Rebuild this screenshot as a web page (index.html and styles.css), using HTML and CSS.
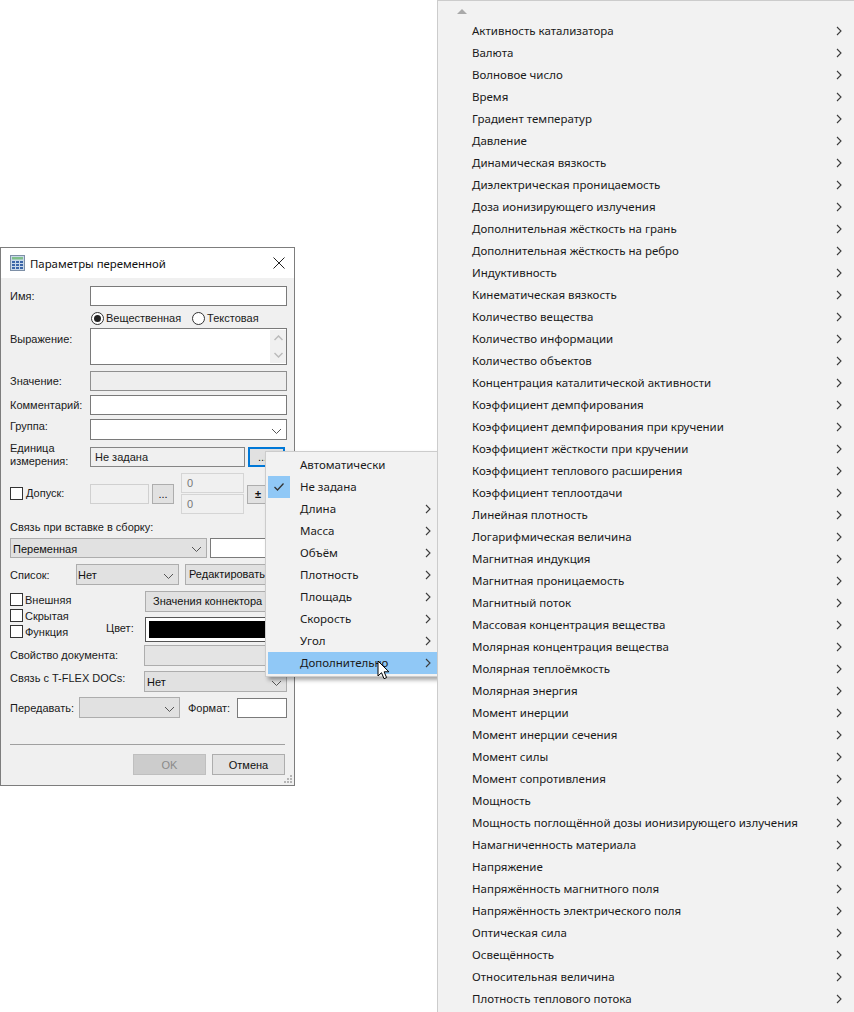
FILE: index.html
```html
<!DOCTYPE html>
<html lang="ru">
<head>
<meta charset="utf-8">
<title>Параметры переменной</title>
<link rel="stylesheet" href="styles.css">
</head>
<body>
<svg class="defs" width="0" height="0" aria-hidden="true">
  <symbol id="chev" viewBox="0 0 6 10"><path d="M1 1l4 4-4 4" fill="none" stroke="#3c3c3c" stroke-width="1.1"/></symbol>
  <symbol id="down" viewBox="0 0 11 6"><path d="M1 1l4.500 4.500L10 1" fill="none" stroke="#555" stroke-width="1"/></symbol>
</svg>
<main class="desktop">
  <section class="dialog">
    <header class="titlebar">
      <svg class="appicon" width="15" height="16" viewBox="0 0 15 16"><rect x=".5" y=".5" width="14" height="15" fill="#c9d8ea" stroke="#7d8fa6"/><rect x="2" y="2" width="11" height="2.500" fill="#7fbf8a"/><g fill="#3c66a8"><rect x="2" y="6" width="3" height="2"/><rect x="6" y="6" width="3" height="2"/><rect x="10" y="6" width="3" height="2"/><rect x="2" y="9" width="3" height="2"/><rect x="6" y="9" width="3" height="2"/><rect x="10" y="9" width="3" height="2"/><rect x="2" y="12" width="3" height="2"/><rect x="6" y="12" width="3" height="2"/><rect x="10" y="12" width="3" height="2"/></g></svg>
      <span class="title">Параметры переменной</span>
      <svg class="close" width="12" height="12" viewBox="0 0 12 12"><path d="M.5.500l11 11M11.500.500l-11 11" stroke="#222" stroke-width="1" fill="none"/></svg>
    </header>
    <div class="body">
      <div class="row r-name"><label class="lbl">Имя:</label><div class="field"></div></div>
      <div class="row r-radio">
        <span class="radio on"></span><span class="rtext">Вещественная</span>
        <span class="radio r2"></span><span class="rtext">Текстовая</span>
      </div>
      <div class="row r-expr"><label class="lbl lbl-top">Выражение:</label>
        <div class="field tall"><div class="spin"><svg width="9" height="6" viewBox="0 0 9 6"><path d="M.5 5l4-4 4 4" fill="none" stroke="#bbb" stroke-width="1.500"/></svg><svg width="9" height="6" viewBox="0 0 9 6"><path d="M.5 1l4 4 4-4" fill="none" stroke="#bbb" stroke-width="1.500"/></svg></div></div>
      </div>
      <div class="row r-val"><label class="lbl">Значение:</label><div class="field off"></div></div>
      <div class="row r-com"><label class="lbl">Комментарий:</label><div class="field"></div></div>
      <div class="row r-grp"><label class="lbl lbl-up">Группа:</label><div class="field sel"><svg class="dn" width="11" height="6"><use href="#down"/></svg></div></div>
      <div class="row r-unit"><label class="lbl two">Единица<br>измерения:</label><div class="field unit">Не задана</div><div class="btn focus">...</div></div>
      <div class="row r-tol">
        <div class="tolcheck"><span class="check"></span><span>Допуск:</span></div>
        <div class="field tolinput"></div>
        <div class="btn dots">...</div>
        <div class="tolpair"><div class="field num">0</div><div class="field num">0</div></div>
        <div class="btn pm">±</div>
      </div>
      <div class="row r-link"><label class="lbl wide">Связь при вставке в сборку:</label></div>
      <div class="row r-var"><div class="combo var">Переменная<svg class="dn" width="11" height="6"><use href="#down"/></svg></div><div class="field varin"></div></div>
      <div class="row r-list"><label class="lbl list">Список:</label><div class="combo lst">Нет<svg class="dn" width="11" height="6"><use href="#down"/></svg></div><div class="btn edit">Редактировать</div></div>
      <div class="row r-flags">
        <div class="flags">
          <div class="flag"><span class="check"></span><span class="ftext">Внешняя</span></div>
          <div class="flag"><span class="check"></span><span class="ftext">Скрытая</span></div>
          <div class="flag"><span class="check"></span><span class="ftext">Функция</span></div>
        </div>
        <div class="flagside">
          <div class="btn conn">Значения коннектора</div>
          <div class="colorrow"><span class="clabel">Цвет:</span><div class="swatch"><div class="black"></div></div></div>
        </div>
      </div>
      <div class="row r-doc"><label class="lbl doc">Свойство документа:</label><div class="combo blank"></div></div>
      <div class="row r-tflex"><label class="lbl doc lbl-up">Связь с T-FLEX DOCs:</label><div class="combo tf">Нет<svg class="dn" width="11" height="6"><use href="#down"/></svg></div></div>
      <div class="row r-send"><label class="lbl sendl">Передавать:</label><div class="combo send"><svg class="dn" width="11" height="6"><use href="#down"/></svg></div><label class="fmt">Формат:</label><div class="field fmtin"></div></div>
      <hr class="sep">
      <div class="row r-foot"><div class="btn disabled">OK</div><div class="btn cancel">Отмена</div></div>
    </div>
    <svg class="grip" width="10" height="10" viewBox="0 0 10 10"><g fill="#b5b5b5"><rect x="7" y="1" width="2" height="2"/><rect x="4" y="4" width="2" height="2"/><rect x="7" y="4" width="2" height="2"/><rect x="1" y="7" width="2" height="2"/><rect x="4" y="7" width="2" height="2"/><rect x="7" y="7" width="2" height="2"/></g></svg>
  </section>

  <nav class="menu first">
    <div class="mi"><span class="mt">Автоматически</span></div>
    <div class="mi"><span class="tick"><svg width="12" height="10" viewBox="0 0 12 10"><path d="M1.500 5l3 3 6-6.500" fill="none" stroke="#333" stroke-width="1.300"/></svg></span><span class="mt">Не задана</span></div>
    <div class="mi"><span class="mt">Длина</span><svg class="ch" width="6" height="10"><use href="#chev"/></svg></div>
    <div class="mi"><span class="mt">Масса</span><svg class="ch" width="6" height="10"><use href="#chev"/></svg></div>
    <div class="mi"><span class="mt">Объём</span><svg class="ch" width="6" height="10"><use href="#chev"/></svg></div>
    <div class="mi"><span class="mt">Плотность</span><svg class="ch" width="6" height="10"><use href="#chev"/></svg></div>
    <div class="mi"><span class="mt">Площадь</span><svg class="ch" width="6" height="10"><use href="#chev"/></svg></div>
    <div class="mi"><span class="mt">Скорость</span><svg class="ch" width="6" height="10"><use href="#chev"/></svg></div>
    <div class="mi"><span class="mt">Угол</span><svg class="ch" width="6" height="10"><use href="#chev"/></svg></div>
    <div class="mi hot"><span class="mt">Дополнительно</span><svg class="ch" width="6" height="10"><use href="#chev"/></svg></div>
  </nav>

  <svg class="cursor" width="13" height="21" viewBox="0 0 13 21"><path d="M1 1v15l3.500-3.300 2.500 6 2.600-1.100-2.500-5.800h4.800z" fill="#fff" stroke="#000" stroke-width="1"/></svg>

  <nav class="menu second">
    <div class="up"><svg width="10" height="5" viewBox="0 0 10 5"><path d="M5 0l5 5H0z" fill="#a9a9a9"/></svg></div>
    <div class="mi2">Активность катализатора<svg class="ch" width="6" height="10"><use href="#chev"/></svg></div>
    <div class="mi2">Валюта<svg class="ch" width="6" height="10"><use href="#chev"/></svg></div>
    <div class="mi2">Волновое число<svg class="ch" width="6" height="10"><use href="#chev"/></svg></div>
    <div class="mi2">Время<svg class="ch" width="6" height="10"><use href="#chev"/></svg></div>
    <div class="mi2">Градиент температур<svg class="ch" width="6" height="10"><use href="#chev"/></svg></div>
    <div class="mi2">Давление<svg class="ch" width="6" height="10"><use href="#chev"/></svg></div>
    <div class="mi2">Динамическая вязкость<svg class="ch" width="6" height="10"><use href="#chev"/></svg></div>
    <div class="mi2">Диэлектрическая проницаемость<svg class="ch" width="6" height="10"><use href="#chev"/></svg></div>
    <div class="mi2">Доза ионизирующего излучения<svg class="ch" width="6" height="10"><use href="#chev"/></svg></div>
    <div class="mi2">Дополнительная жёсткость на грань<svg class="ch" width="6" height="10"><use href="#chev"/></svg></div>
    <div class="mi2">Дополнительная жёсткость на ребро<svg class="ch" width="6" height="10"><use href="#chev"/></svg></div>
    <div class="mi2">Индуктивность<svg class="ch" width="6" height="10"><use href="#chev"/></svg></div>
    <div class="mi2">Кинематическая вязкость<svg class="ch" width="6" height="10"><use href="#chev"/></svg></div>
    <div class="mi2">Количество вещества<svg class="ch" width="6" height="10"><use href="#chev"/></svg></div>
    <div class="mi2">Количество информации<svg class="ch" width="6" height="10"><use href="#chev"/></svg></div>
    <div class="mi2">Количество объектов<svg class="ch" width="6" height="10"><use href="#chev"/></svg></div>
    <div class="mi2">Концентрация каталитической активности<svg class="ch" width="6" height="10"><use href="#chev"/></svg></div>
    <div class="mi2">Коэффициент демпфирования<svg class="ch" width="6" height="10"><use href="#chev"/></svg></div>
    <div class="mi2">Коэффициент демпфирования при кручении<svg class="ch" width="6" height="10"><use href="#chev"/></svg></div>
    <div class="mi2">Коэффициент жёсткости при кручении<svg class="ch" width="6" height="10"><use href="#chev"/></svg></div>
    <div class="mi2">Коэффициент теплового расширения<svg class="ch" width="6" height="10"><use href="#chev"/></svg></div>
    <div class="mi2">Коэффициент теплоотдачи<svg class="ch" width="6" height="10"><use href="#chev"/></svg></div>
    <div class="mi2">Линейная плотность<svg class="ch" width="6" height="10"><use href="#chev"/></svg></div>
    <div class="mi2">Логарифмическая величина<svg class="ch" width="6" height="10"><use href="#chev"/></svg></div>
    <div class="mi2">Магнитная индукция<svg class="ch" width="6" height="10"><use href="#chev"/></svg></div>
    <div class="mi2">Магнитная проницаемость<svg class="ch" width="6" height="10"><use href="#chev"/></svg></div>
    <div class="mi2">Магнитный поток<svg class="ch" width="6" height="10"><use href="#chev"/></svg></div>
    <div class="mi2">Массовая концентрация вещества<svg class="ch" width="6" height="10"><use href="#chev"/></svg></div>
    <div class="mi2">Молярная концентрация вещества<svg class="ch" width="6" height="10"><use href="#chev"/></svg></div>
    <div class="mi2">Молярная теплоёмкость<svg class="ch" width="6" height="10"><use href="#chev"/></svg></div>
    <div class="mi2">Молярная энергия<svg class="ch" width="6" height="10"><use href="#chev"/></svg></div>
    <div class="mi2">Момент инерции<svg class="ch" width="6" height="10"><use href="#chev"/></svg></div>
    <div class="mi2">Момент инерции сечения<svg class="ch" width="6" height="10"><use href="#chev"/></svg></div>
    <div class="mi2">Момент силы<svg class="ch" width="6" height="10"><use href="#chev"/></svg></div>
    <div class="mi2">Момент сопротивления<svg class="ch" width="6" height="10"><use href="#chev"/></svg></div>
    <div class="mi2">Мощность<svg class="ch" width="6" height="10"><use href="#chev"/></svg></div>
    <div class="mi2">Мощность поглощённой дозы ионизирующего излучения<svg class="ch" width="6" height="10"><use href="#chev"/></svg></div>
    <div class="mi2">Намагниченность материала<svg class="ch" width="6" height="10"><use href="#chev"/></svg></div>
    <div class="mi2">Напряжение<svg class="ch" width="6" height="10"><use href="#chev"/></svg></div>
    <div class="mi2">Напряжённость магнитного поля<svg class="ch" width="6" height="10"><use href="#chev"/></svg></div>
    <div class="mi2">Напряжённость электрического поля<svg class="ch" width="6" height="10"><use href="#chev"/></svg></div>
    <div class="mi2">Оптическая сила<svg class="ch" width="6" height="10"><use href="#chev"/></svg></div>
    <div class="mi2">Освещённость<svg class="ch" width="6" height="10"><use href="#chev"/></svg></div>
    <div class="mi2">Относительная величина<svg class="ch" width="6" height="10"><use href="#chev"/></svg></div>
    <div class="mi2">Плотность теплового потока<svg class="ch" width="6" height="10"><use href="#chev"/></svg></div>
  </nav>
</main>
</body>
</html>
```
FILE: styles.css
```css
* { box-sizing: border-box; }
html, body { margin: 0; padding: 0; background: #fff; }
body { font-family: "Liberation Sans", Arial, sans-serif; font-size: 11px; line-height: 13px; color: #1a1a1a; overflow: hidden; }
.defs { position: absolute; }
.desktop { position: relative; width: 854px; height: 1012px; overflow: hidden; }

.dialog { position: absolute; left: 0; top: 247px; width: 295px; height: 539px; background: #f0f0f0; border: 1px solid #7d7d7d; }
.titlebar { display: flex; align-items: center; height: 30px; background: #fff; padding: 0 9px 0 9px; }
.appicon { flex: none; }
.title { margin-left: 5px; font-family: "Noto Sans", sans-serif; font-size: 11.400px; flex: 1; color: #111; }
.close { flex: none; }
.body { padding: 0 7px 0 9px; }
.grip { position: absolute; right: 1px; bottom: 1px; }

.row { display: flex; align-items: center; }
.lbl { width: 80px; flex: none; }
.lbl-up { position: relative; top: -3px; }
.lbl-top { align-self: flex-start; padding-top: 5px; }
.two { margin-top: -5px; }
.wide { width: auto; line-height: 14px; }
.list { width: 66px; position: relative; top: 1px; }
.doc { width: 134px; }
.sendl { width: 69px; padding-top: 2px; }

.field { flex: none; width: 197px; height: 20px; background: #fff; border: 1px solid #7a7a7a; }
.off { background: #eeeeee; border-color: #8f8f8f; }
.tall { height: 37px; position: relative; }
.spin { position: absolute; right: 0; top: 1px; bottom: 1px; width: 16px; background: #f0f0f0; display: flex; flex-direction: column; align-items: center; justify-content: space-around; }
.sel { position: relative; height: 21px; }
.dn { position: absolute; right: 4px; top: 50%; margin-top: -2px; }

.r-name { margin-top: 8px; }
.r-radio { margin-top: 5px; height: 14px; padding-left: 81px; }
.radio { flex: none; width: 13px; height: 13px; border: 1px solid #333; border-radius: 50%; background: #fff; position: relative; }
.radio.on::after { content: ""; position: absolute; left: 2px; top: 2px; width: 7px; height: 7px; border-radius: 50%; background: #222; }
.r2 { margin-left: 11px; }
.rtext { margin-left: 2px; }
.r-expr { margin-top: 3px; }
.r-val { margin-top: 6px; }
.r-com { margin-top: 4px; }
.r-grp { margin-top: 4px; }
.r-unit { margin-top: 7px; height: 20px; }
.unit { width: 155px; background: #f0f0f0; padding-left: 4px; line-height: 18px; border-color: #858585; }
.btn { flex: none; height: 20px; background: #e1e1e1; border: 1px solid #adadad; display: flex; align-items: center; justify-content: center; color: #111; }
.focus { margin-left: 3px; width: 37px; border: 2px solid #0078d7; justify-content: flex-start; padding-left: 8px; }

.r-tol { margin-top: 6px; height: 41px; align-items: flex-start; }
.tolcheck { width: 80px; flex: none; margin-top: 14px; display: flex; align-items: center; gap: 3px; }
.check { flex: none; width: 13px; height: 13px; border: 1px solid #333; background: #fff; }
.tolinput { width: 59px; margin-top: 11px; background: #f0f0f0; border-color: #d0d0d0; }
.dots { width: 22px; margin: 11px 0 0 3px; }
.tolpair { margin-left: 7px; display: flex; flex-direction: column; gap: 1px; }
.num { width: 63px; background: #f0f0f0; border-color: #d5d5d5; padding-left: 5px; line-height: 18px; color: #777; }
.pm { width: 40px; margin: 12px 0 0 3px; height: 19px; font-weight: 700; justify-content: flex-start; padding-left: 7px; }

.r-link { margin-top: 6px; }
.r-var { margin-top: 4px; }
.combo { flex: none; position: relative; height: 21px; background: #e1e1e1; border: 1px solid #adadad; padding-left: 2px; line-height: 20px; color: #111; }
.var { width: 197px; height: 20px; line-height: 20px; }
.varin { width: 77px; margin-left: 3px; }
.r-list { margin-top: 6px; }
.lst { width: 103px; padding-left: 1px; }
.edit { margin-left: 6px; width: 103px; height: 21px; justify-content: flex-start; padding-left: 3px; }

.r-flags { margin-top: 6px; align-items: flex-start; height: 51px; }
.flags { width: 135px; flex: none; display: flex; flex-direction: column; gap: 3px; padding-top: 2px; }
.flag { display: flex; align-items: center; gap: 2px; height: 13px; }
.ftext { padding-top: 2px; }
.flagside { flex: none; display: flex; flex-direction: column; }
.conn { width: 142px; height: 21px; justify-content: flex-start; padding-left: 7px; }
.colorrow { position: relative; margin-top: 5px; }
.clabel { position: absolute; left: -39px; top: 5px; }
.swatch { width: 143px; height: 25px; background: #fff; border: 1px solid #555; padding: 3px; }
.black { height: 17px; background: #000; }

.r-doc { margin-top: 3px; }
.blank { width: 143px; background: #e4e4e4; }
.r-tflex { margin-top: 5px; }
.tf { width: 143px; }
.r-send { margin-top: 5px; }
.send { width: 101px; }
.fmt { margin-left: 8px; width: 49px; padding-top: 2px; }
.fmtin { width: 50px; }
.sep { margin: 26px 2px 0 0; border: 0; border-top: 1px solid #a0a0a0; }
.r-foot { margin-top: 9px; justify-content: flex-end; gap: 6px; padding-right: 2px; }
.r-foot .btn { width: 73px; height: 21px; padding-top: 2px; }
.disabled { background: #cccccc; border-color: #bfbfbf; color: #8a8a8a; }

.menu { position: absolute; background: #f2f2f2; border: 1px solid #cccccc; font-family: "Noto Sans", sans-serif; font-size: 11.500px; }
.first { left: 265px; top: 451px; width: 173px; height: 226px; padding: 2px 0 0 2px; box-shadow: 3px 3px 4px rgba(0,0,0,.35); }
.mi { position: relative; height: 22px; display: flex; align-items: center; padding: 0 0 2px 32px; }
.tick { position: absolute; left: 0; top: 0; width: 22px; height: 22px; background: #90c8f6; display: flex; align-items: center; justify-content: center; }
.mt { flex: 1; }
.ch { position: absolute; right: 6px; top: 6px; }
.hot { background: #90c8f6; }
.cursor { position: absolute; left: 377px; top: 660px; z-index: 3; }

.second { left: 437px; top: 0; width: 417px; height: 1014px; border-right: 0; }
.up { height: 19px; padding: 8px 0 0 19px; display: flex; align-items: flex-start; }
.mi2 { position: relative; height: 22px; line-height: 21px; padding-left: 34px; }
.mi2 .ch { right: 12px; top: 6px; }
```
